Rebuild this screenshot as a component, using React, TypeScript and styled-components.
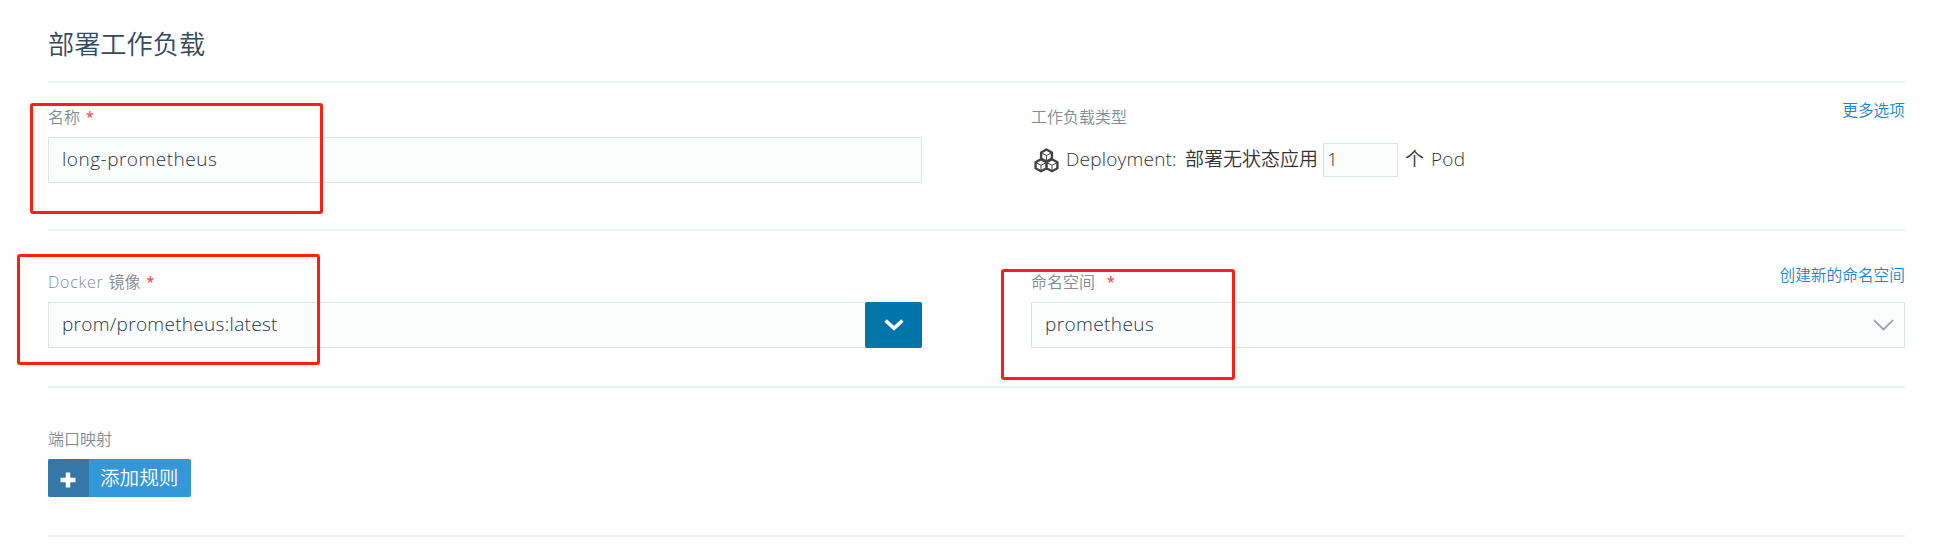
import React from "react";
import styled, { createGlobalStyle } from "styled-components";

const GlobalStyle = createGlobalStyle`
  * { box-sizing: border-box; }
  body {
    margin: 0;
    background: #fff;
    color: #333;
    font-family: "Open Sans", "Noto Sans CJK SC", sans-serif;
    font-weight: 350;
    font-size: 19px;
  }
`;

const Page = styled.main`
  position: relative;
  height: 545px;
  padding: 0 31px 0 48px;
  overflow: hidden;
`;

const Header = styled.header`
  height: 83px;
  padding-top: 24px;
  border-bottom: 2px solid #ecf0f0;
`;

const Title = styled.h1`
  margin: 0;
  font-size: 26.2px;
  line-height: 40px;
  font-weight: 350;
  color: #34495e;
`;

const Section = styled.section<{ $height: number; $top: number }>`
  display: grid;
  grid-template-columns: 874px 874px;
  justify-content: space-between;
  align-items: start;
  height: ${(p) => p.$height}px;
  padding-top: ${(p) => p.$top}px;
  border-bottom: 2px solid #ecf0f0;
`;

const LabelRow = styled.div`
  display: flex;
  justify-content: space-between;
  height: 34px;
`;

const Label = styled.label`
  display: flex;
  font-size: 16px;
  line-height: 28px;
  color: #828c93;
  white-space: pre;
`;

const Latin = styled.span<{ $spacing: number }>`
  letter-spacing: ${(p) => p.$spacing}px;
`;

const Required = styled.span<{ $gap: number }>`
  margin-left: ${(p) => p.$gap}px;
  font-size: 14px;
  font-weight: 600;
  color: #f34f4f;
`;

const Link = styled.a`
  margin-top: -7px;
  font-size: 15.7px;
  line-height: 29px;
  color: #1f83cc;
  text-decoration: none;
`;

const InputBox = styled.div`
  display: flex;
  align-items: center;
  justify-content: space-between;
  height: 46px;
  padding-left: 13px;
  border: 1px solid #dce4e4;
  background: #fbfdfc;
  line-height: 28px;
  color: #26364a;
`;

const Value = styled(Latin)`
  margin-bottom: 2px;
`;

const Toggle = styled.button`
  display: flex;
  align-items: center;
  justify-content: center;
  width: 57px;
  height: 46px;
  margin-right: -1px;
  padding: 0;
  border: 0;
  border-radius: 2px;
  background: #0075a8;
`;

const SelectArrow = styled.svg`
  margin-right: 10px;
`;

const WorkloadRow = styled.div`
  display: flex;
  align-items: center;
  height: 46px;
  padding-left: 3px;
  line-height: 28px;
  white-space: nowrap;
`;

const Kind = styled(Value)`
  width: 119px;
  margin-left: 7px;
`;

const KindText = styled.span`
  width: 138px;
  margin-bottom: 2px;
`;

const CountInput = styled.div`
  width: 75px;
  height: 34px;
  margin-right: 7px;
  padding-left: 3px;
  border: 1px solid #dce4e4;
  background: #fbfdfc;
  line-height: 31px;
`;

const Unit = styled.span`
  width: 26px;
  margin-bottom: 2px;
`;

const AddButton = styled.button`
  display: flex;
  width: 143px;
  height: 38px;
  padding: 0;
  overflow: hidden;
  border: 0;
  border-radius: 2px;
  background: #3497da;
  color: #fff;
  font: inherit;
  font-size: 19.6px;
  line-height: 38px;
`;

const AddIcon = styled.span`
  display: flex;
  align-items: center;
  justify-content: center;
  width: 41px;
  height: 38px;
  padding: 4px 1px 0 0;
  margin-right: 11px;
  background: #3578a8;
`;

const Highlight = styled.div<{ $x: number; $y: number; $w: number }>`
  position: absolute;
  left: ${(p) => p.$x}px;
  top: ${(p) => p.$y}px;
  width: ${(p) => p.$w}px;
  height: 111px;
  border: 3px solid #ff1f12;
  border-radius: 3px;
  pointer-events: none;
`;

const cube = (x: number, y: number) =>
  `M${x} ${y - 6}L${x + 5.4} ${y - 3}V${y + 3}L${x} ${y + 6}L${x - 5.4} ${y + 3}V${y - 3}Z`;
const edges = (x: number, y: number) =>
  `M${x - 5} ${y - 2.6}L${x} ${y}L${x + 5} ${y - 2.6}M${x} ${y}V${y + 5.6}`;

const CubesIcon = () => (
  <svg width="25" height="25" viewBox="0 0 25 25" fill="none" stroke="#424242">
    <path d={cube(12.5, 7.5) + cube(7, 17.3) + cube(18, 17.3)} strokeWidth="2.4" strokeLinejoin="round" />
    <path d={edges(12.5, 7.5) + edges(7, 17.3) + edges(18, 17.3)} strokeWidth="1" />
  </svg>
);

export default function App() {
  return (
    <>
      <GlobalStyle />
      <Page>
        <Header>
          <Title>部署工作负载</Title>
        </Header>

        <Section $height={148} $top={20}>
          <div>
            <LabelRow>
              <Label>名称<Required $gap={6}>*</Required></Label>
            </LabelRow>
            <InputBox><Value $spacing={0.5}>long-prometheus</Value></InputBox>
          </div>
          <div>
            <LabelRow>
              <Label>工作负载类型</Label>
              <Link>更多选项</Link>
            </LabelRow>
            <WorkloadRow>
              <CubesIcon />
              <Kind $spacing={0.2}>Deployment:</Kind>
              <KindText>部署无状态应用</KindText>
              <CountInput>1</CountInput>
              <Unit>个</Unit>
              <Value $spacing={0.2}>Pod</Value>
            </WorkloadRow>
          </div>
        </Section>

        <Section $height={157} $top={37}>
          <div>
            <LabelRow>
              <Label><Latin $spacing={0.75}>Docker </Latin>镜像<Required $gap={6}>*</Required></Label>
            </LabelRow>
            <InputBox>
              <Value $spacing={0.3}>prom/prometheus:latest</Value>
              <Toggle aria-label="镜像">
                <svg width="20" height="12" viewBox="0 0 20 12" fill="none" stroke="#fff" strokeWidth="3.6">
                  <path d="M1.6 1.5L10 9.3L18.4 1.5" />
                </svg>
              </Toggle>
            </InputBox>
          </div>
          <div>
            <LabelRow>
              <Label>命名空间<Required $gap={12}>*</Required></Label>
              <Link>创建新的命名空间</Link>
            </LabelRow>
            <InputBox>
              <Value $spacing={0.4}>prometheus</Value>
              <SelectArrow width="21" height="12" viewBox="0 0 21 12" fill="none" stroke="#98a2a9" strokeWidth="1.8">
                <path d="M1 1.2L10.5 10.5L20 1.2" />
              </SelectArrow>
            </InputBox>
          </div>
        </Section>

        <Section $height={149} $top={37}>
          <div>
            <LabelRow>
              <Label>端口映射</Label>
            </LabelRow>
            <AddButton>
              <AddIcon>
                <svg width="16" height="16" viewBox="0 0 16 16" stroke="#fff" strokeWidth="4.4">
                  <path d="M8 0.5V15.5M0.5 8H15.5" />
                </svg>
              </AddIcon>
              添加规则
            </AddButton>
          </div>
        </Section>

        <Highlight $x={30} $y={103} $w={293} />
        <Highlight $x={17} $y={254} $w={303} />
        <Highlight $x={1001} $y={269} $w={234} />
      </Page>
    </>
  );
}
